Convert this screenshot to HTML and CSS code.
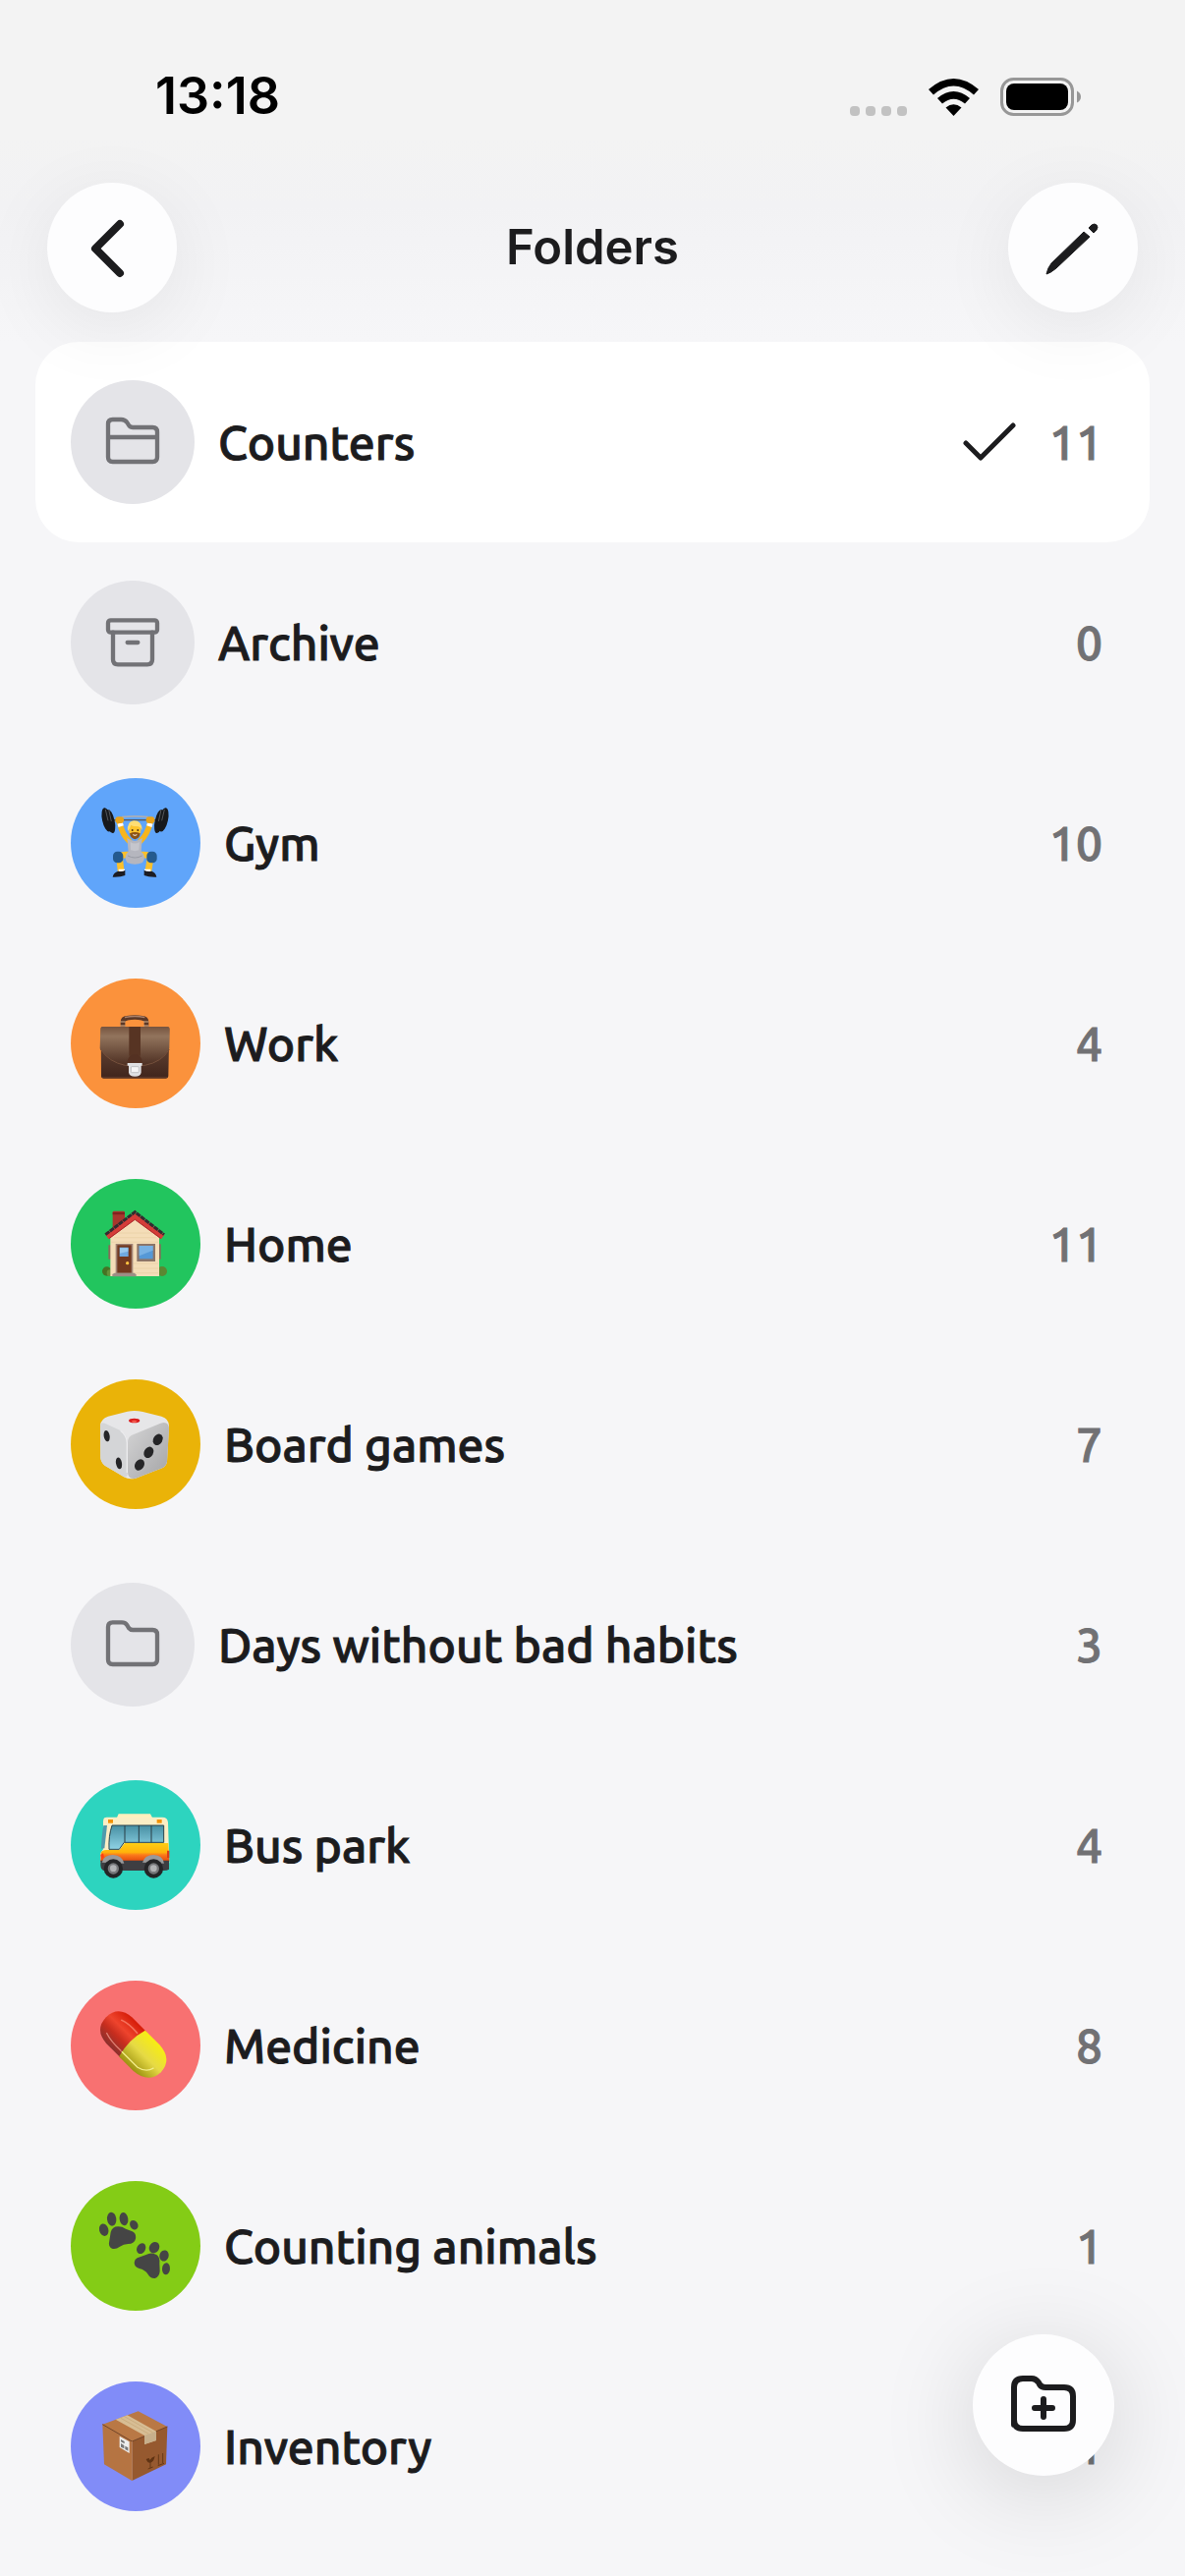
FILE: index.html
```
<!DOCTYPE html>
<html lang="en">
<head>
  <meta charset="UTF-8">
  <meta name="viewport" content="width=device-width, initial-scale=1.0">
  <title>Folders</title>
  <link rel="stylesheet" href="styles.css">
</head>
<body>

  <header class="top">
    <div class="status-bar">
      <span class="time">13:18</span>
      <div class="status-icons">
        <svg class="dots" viewBox="0 0 58 10" fill="#c2c2c2">
          <rect width="10" height="10" rx="4"/>
          <rect x="16" width="10" height="10" rx="4"/>
          <rect x="32" width="10" height="10" rx="4"/>
          <rect x="48" width="10" height="10" rx="4"/>
        </svg>
        <svg class="wifi" viewBox="0 0 51 38">
          <path d="M0 11Q25.500 -11 51 11L46 16.500Q25.500 -1.500 5 16.500Z"/>
          <path d="M9 20Q25.500 6 42 20L37 25.500Q25.500 16 14 25.500Z"/>
          <path d="M17.500 29.500Q25.500 23 33.500 29.500L25.500 38Z"/>
        </svg>
        <svg class="battery" viewBox="0 0 83 39">
          <rect x="1.500" y="1.500" width="72" height="36" rx="12" fill="none" stroke="#979797" stroke-width="3"/>
          <rect x="6" y="6" width="63" height="27" rx="8"/>
          <path d="M78 13.500Q82 15.500 82 19.500Q82 23.500 78 25.500Z" fill="#979797"/>
        </svg>
      </div>
    </div>
    <nav class="nav">
      <button class="round-btn" type="button" aria-label="Back">
        <svg viewBox="0 0 132 132"><path class="line chevron" d="M74 42L49 67L74 92"/></svg>
      </button>
      <h1>Folders</h1>
      <button class="round-btn" type="button" aria-label="Edit">
        <svg viewBox="0 0 132 132" fill="#1c1c1e" stroke="#1c1c1e" stroke-linejoin="round">
          <path d="M39 93Q40 87 44 82L77 50L83 55L49 87Q43 92 39 93Z"/>
          <path d="M82 46L85 43Q88 41 90 43Q92 45 90 48L87 51Z"/>
        </svg>
      </button>
    </nav>
  </header>

  <main>
    <ul class="folders">
      <li><a class="row selected" href="#">
        <svg class="icon plain" viewBox="96 141 378 378">
          <path d="M210 376V275Q210 261 224 261H250Q261 261 267 269L273 278Q278 285 286 285H346Q360 285 360 299V376Q360 390 346 390H224Q210 390 210 376ZM210 315H360"/>
        </svg>
        <span class="name">Counters</span>
        <svg class="check" viewBox="0 0 54 42"><path class="line" d="M3 22L18 37L51 4"/></svg>
        <span class="count">11</span>
      </a></li>
      <li><a class="row" href="#">
        <svg class="icon plain" viewBox="96 753 378 378">
          <rect x="210" y="874" width="150" height="37" rx="8"/>
          <path d="M225 911V994Q225 1009 240 1009H330Q345 1009 345 994V911M269 942H301"/>
        </svg>
        <span class="name">Archive</span>
        <span class="count">0</span>
      </a></li>
      <li><a class="row" href="#">
        <svg class="icon blue" viewBox="66 66 396 396">
          <path d="M195 194L325 194" stroke="#555" stroke-width="4"/>
          <path d="M222 185Q260 180 302 185" stroke="#a9aeb8" stroke-width="5" fill="none"/>
          <g fill="#17191c">
            <ellipse cx="176" cy="193" rx="14" ry="37" transform="rotate(-12 176 193)"/>
            <ellipse cx="187" cy="198" rx="13" ry="37" transform="rotate(-12 187 198)"/>
            <ellipse cx="349" cy="193" rx="14" ry="37" transform="rotate(12 349 193)"/>
            <ellipse cx="336" cy="198" rx="13" ry="37" transform="rotate(12 336 198)"/>
          </g>
          <path d="M172 162L180 196M182 162L190 198M352 162L344 196M342 162L334 198" stroke="#55575b" stroke-width="3"/>
          <path d="M216 205Q223 237 244 258M308 205Q300 237 279 258" stroke="#f6b51c" stroke-width="17" stroke-linecap="round" fill="none"/>
          <path d="M210 211L226 206M299 206L315 211" stroke="#fff" stroke-width="10"/>
          <rect x="202" y="184" width="26" height="20" rx="9" fill="#e9a31b"/>
          <rect x="296" y="184" width="26" height="20" rx="9" fill="#e9a31b"/>
          <path d="M240 300Q215 299 215 311L219 348M283 300Q309 299 309 311L303 348" stroke="#fbc02b" stroke-width="20" stroke-linecap="round" fill="none"/>
          <path d="M238 249Q262 267 284 249L281 290Q299 304 285 324Q262 334 238 324Q226 304 242 290Z" fill="#b5b6be"/>
          <path d="M248 261Q262 270 276 261L274 286Q262 291 249 286Z" fill="#c5c6cd"/>
          <path d="M240 303Q262 315 284 303" stroke="#999ba4" stroke-width="3" fill="none"/>
          <path d="M243 219Q244 246 262 249Q280 247 281 219Q271 205 252 208Z" fill="#ffc52e"/>
          <path d="M240 228Q237 199 258 196Q283 195 284 225Q279 213 266 213Q253 213 250 209Q247 220 240 228Z" fill="#ffdd73"/>
          <path d="M246 235Q262 227 278 235Q276 251 262 253Q248 250 246 235Z" fill="#8c5315"/>
          <path d="M256 239Q262 243 268 239" stroke="#fff" stroke-width="3" fill="none"/>
          <circle cx="254" cy="225" r="3" fill="#513414"/><circle cx="271" cy="225" r="3" fill="#513414"/>
          <rect x="195" y="290" width="31" height="35" rx="13" fill="#245a8e"/>
          <rect x="298" y="290" width="31" height="35" rx="13" fill="#245a8e"/>
          <path d="M212 344H231V354H212ZM291 344H310V354H291Z" fill="#fff"/>
          <path d="M194 368Q196 354 211 350Q224 353 232 347V363Q218 369 194 368ZM328 368Q326 354 313 350Q300 353 290 347V363Q304 369 328 368Z" fill="#1c1c22"/>
        </svg>
        <span class="name">Gym</span>
        <span class="count">10</span>
      </a></li>
      <li><a class="row" href="#">
        <svg class="icon orange" viewBox="66 78 396 396">
          <defs>
            <linearGradient id="flap" x1="0" y1="0" x2="0" y2="1"><stop offset="0" stop-color="#76543f"/><stop offset=".25" stop-color="#92745d"/><stop offset="1" stop-color="#4d2f22"/></linearGradient>
            <linearGradient id="bag" x1="0" y1="0" x2="0" y2="1"><stop offset="0" stop-color="#755441"/><stop offset="1" stop-color="#3f241b"/></linearGradient>
          </defs>
          <path d="M225 224V211Q225 200 238 199Q262 194 284 199Q297 200 297 211V224" stroke="#5b3827" stroke-width="14" fill="none"/>
          <path d="M231 197Q262 190 292 197" stroke="#aa806a" stroke-width="4" fill="none"/>
          <path d="M217 210H233M288 210H304M217 222H233M288 222H304" stroke="#d8b08d" stroke-width="3"/>
          <path d="M158 230Q158 225 164 225H360Q366 225 367 231L364 376Q364 383 357 383H167Q159 383 159 376Z" fill="url(#bag)"/>
          <path d="M157 231Q157 225 164 225H361Q368 225 368 231L367 292Q345 333 292 343H232Q180 333 155 292Z" fill="url(#flap)"/>
          <path d="M157 294Q182 333 232 343H292Q345 333 367 294" stroke="#75503c" stroke-width="3" fill="none"/>
          <path d="M244 225H279V314H244Z" fill="#573423"/>
          <path d="M238 337Q240 310 262 310Q283 310 285 337Z" fill="#543122"/>
          <path d="M161 379H362" stroke="#6b4635" stroke-width="2"/>
          <path d="M239 336H284V344H281V365Q279 377 262 377Q245 377 243 365V344H239Z" fill="#dfe0e2"/>
          <rect x="250" y="347" width="24" height="18" rx="3" fill="#f5f5f5" stroke="#a9abad" stroke-width="2"/>
        </svg>
        <span class="name">Work</span>
        <span class="count">4</span>
      </a></li>
      <li><a class="row" href="#">
        <svg class="icon green" viewBox="66 60 396 396">
          <rect x="194" y="158" width="37" height="62" rx="4" fill="#a8372d"/>
          <path d="M194 162H231V169H194Z" fill="#81241f"/>
          <circle cx="176" cy="342" r="14" fill="#467324"/><circle cx="186" cy="347" r="10" fill="#65913a"/>
          <circle cx="345" cy="342" r="15" fill="#5b8732"/>
          <path d="M181 262H190V305H181ZM333 259H341V305H333Z" fill="#8a6959"/>
          <path d="M187 232L262 174L336 232V357H187Z" fill="#f4ddb8"/>
          <path d="M208 225H314M198 239H326M190 253H333M257 318H333M257 333H333M257 347H333" stroke="#e8cfa4" stroke-width="2"/>
          <path d="M177 237L262 173L347 237" fill="none" stroke="#d43d39" stroke-width="17"/>
          <path d="M172 230L262 161L351 230" fill="none" stroke="#332b30" stroke-width="9" stroke-dasharray="15 2"/>
          <path d="M184 241L262 184L340 241" fill="none" stroke="#a92529" stroke-width="3"/>
          <rect x="203" y="258" width="53" height="90" fill="#a18475"/>
          <rect x="208" y="262" width="43" height="85" fill="#73391f"/>
          <rect x="215" y="269" width="27" height="28" fill="#70aae0"/>
          <path d="M216 271H241V281L216 287Z" fill="#9ac9ed"/>
          <circle cx="239" cy="317" r="5" fill="#ffc343"/>
          <path d="M193 358V351L200 347H260L266 352V358Z" fill="#9d8e85"/>
          <rect x="268" y="258" width="56" height="54" fill="#8c7568"/>
          <rect x="275" y="264" width="42" height="40" fill="#5598d6"/>
          <path d="M275 264H317V278L275 295Z" fill="#78b1e3"/>
        </svg>
        <span class="name">Home</span>
        <span class="count">11</span>
      </a></li>
      <li><a class="row" href="#">
        <svg class="icon yellow" viewBox="66 72 396 396">
          <defs>
            <linearGradient id="dieRight" x1="0" y1="0" x2="1" y2="1"><stop offset="0" stop-color="#d5d5d6"/><stop offset="1" stop-color="#a4a4a6"/></linearGradient>
          </defs>
          <path d="M156 212Q158 193 180 185L239 170Q262 165 286 171L343 185Q366 192 366 214L360 323Q358 336 345 343L264 374Q244 379 228 370L170 335Q158 325 157 312Z" fill="#e6e6e8"/>
          <path d="M239 266Q240 244 260 239L340 206Q366 198 366 224L360 323Q358 336 345 343L264 374Q241 380 240 355Z" fill="url(#dieRight)"/>
          <path d="M156 210Q159 202 172 207L219 229Q238 239 239 266L240 356Q238 378 224 367L170 335Q158 325 157 312Z" fill="#d4d5d7"/>
          <path d="M238 357V265Q236 242 218 229" fill="none" stroke="#ececee" stroke-width="4"/>
          <ellipse cx="260" cy="198" rx="17" ry="7" fill="#d91d1d"/><ellipse cx="260" cy="200" rx="8" ry="3" fill="#f55f52"/>
          <g fill="#252527">
            <ellipse cx="176" cy="245" rx="9" ry="17" transform="rotate(-10 176 245)"/>
            <ellipse cx="213" cy="328" rx="9" ry="18" transform="rotate(-10 213 328)"/>
            <ellipse cx="332" cy="256" rx="14" ry="18" transform="rotate(30 332 256)"/>
            <ellipse cx="304" cy="295" rx="14" ry="18" transform="rotate(30 304 295)"/>
            <ellipse cx="276" cy="333" rx="14" ry="18" transform="rotate(30 276 333)"/>
          </g>
        </svg>
        <span class="name">Board games</span>
        <span class="count">7</span>
      </a></li>
      <li><a class="row" href="#">
        <svg class="icon plain" viewBox="66 63 378 378">
          <path d="M180 298V198Q180 184 194 184H222Q232 184 237 191L243 201Q248 207 256 207H316Q330 207 330 221V298Q330 312 316 312H194Q180 312 180 298Z"/>
        </svg>
        <span class="name">Days without bad habits</span>
        <span class="count">3</span>
      </a></li>
      <li><a class="row" href="#">
        <svg class="icon teal" viewBox="66 666 396 396">
          <defs>
            <linearGradient id="glass" x1="0" y1="0" x2="0" y2="1"><stop offset="0" stop-color="#478fa3"/><stop offset="1" stop-color="#8fd3e5"/></linearGradient>
            <linearGradient id="busSide" x1="0" y1="0" x2="0" y2="1"><stop offset="0" stop-color="#ffce14"/><stop offset=".5" stop-color="#ffb30b"/><stop offset=".65" stop-color="#fb781b"/><stop offset="1" stop-color="#e4480c"/></linearGradient>
          </defs>
          <path d="M207 780L212 769H309L315 780Z" fill="#fff0bd"/>
          <path d="M166 786Q167 779 176 779H345Q362 779 363 795L367 919H157V889L165 877V801Q164 792 166 786Z" fill="#fbeec5"/>
          <path d="M166 804H177L169 874L159 875Q160 835 166 804Z" fill="#4f9aac"/>
          <path d="M158 888Q160 880 174 879H215L231 858H364L367 914H157Z" fill="url(#busSide)"/>
          <path d="M157 911H366V938Q360 942 350 942H166Q157 937 157 924Z" fill="#3e3e42"/>
          <path d="M192 804H350V856H229L214 877H183Q181 837 192 804Z" fill="url(#glass)" stroke="#27434c" stroke-width="3"/>
          <path d="M231 804V855M274 804V856M312 804V856" stroke="#283c44" stroke-width="3"/>
          <rect x="180" y="786" width="15" height="11" fill="#f39200"/><rect x="329" y="786" width="15" height="11" fill="#f39200"/>
          <path d="M161 917Q166 895 195 894Q224 896 229 920ZM285 917Q291 895 319 894Q347 895 351 920Z" fill="#99999a"/>
          <path d="M157 894L165 889L168 901L160 907Z" fill="#ff3e14"/><path d="M360 881H367V903H360Z" fill="#db3c17"/>
          <g>
            <circle cx="196" cy="936" r="29" fill="#252527"/><circle cx="196" cy="936" r="17" fill="#77787b"/><circle cx="196" cy="935" r="10" fill="#b2b3b5"/>
            <circle cx="319" cy="936" r="29" fill="#252527"/><circle cx="319" cy="936" r="17" fill="#77787b"/><circle cx="319" cy="935" r="10" fill="#b2b3b5"/>
          </g>
        </svg>
        <span class="name">Bus park</span>
        <span class="count">4</span>
      </a></li>
      <li><a class="row" href="#">
        <svg class="icon red" viewBox="66 48 396 396">
          <defs>
            <linearGradient id="pillRed" x1="0" y1="0" x2="0" y2="1"><stop offset="0" stop-color="#d61c08"/><stop offset=".4" stop-color="#ee442d"/><stop offset=".65" stop-color="#c82d1e"/><stop offset="1" stop-color="#8c302d"/></linearGradient>
            <linearGradient id="pillYellow" x1="0" y1="0" x2="0" y2="1"><stop offset="0" stop-color="#f7ed12"/><stop offset=".5" stop-color="#e6da45"/><stop offset="1" stop-color="#9c9210"/></linearGradient>
          </defs>
          <g transform="rotate(45 258 244)">
            <path d="M258 188H196Q140 192 139 244Q140 296 196 300H258Z" fill="url(#pillRed)"/>
            <path d="M252 188H314Q374 192 376 244Q374 296 314 301H252Q235 244 252 188Z" fill="url(#pillYellow)"/>
            <path d="M179 217Q200 208 240 211" stroke="#f5705b" stroke-width="5" stroke-linecap="round" fill="none"/>
            <path d="M175 277Q200 286 243 284" stroke="#de8175" stroke-width="4" stroke-linecap="round" fill="none"/>
            <path d="M248 284H315Q345 277 351 252" stroke="#f4ed8b" stroke-width="4" stroke-linecap="round" fill="none"/>
          </g>
        </svg>
        <span class="name">Medicine</span>
        <span class="count">8</span>
      </a></li>
      <li><a class="row" href="#">
        <svg class="icon lime" viewBox="66 60 396 396" fill="#454545">
          <ellipse cx="167" cy="209" rx="14" ry="19" transform="rotate(-15 167 209)"/>
          <ellipse cx="191" cy="176" rx="14" ry="21" transform="rotate(-7 191 176)"/>
          <ellipse cx="228" cy="176" rx="13" ry="20" transform="rotate(-9 228 176)"/>
          <ellipse cx="259" cy="194" rx="12" ry="15" transform="rotate(-30 259 194)"/>
          <path d="M188 216Q193 198 212 199Q223 199 234 206L254 214Q267 221 264 236Q261 251 241 252Q227 252 216 260Q204 269 192 266Q181 262 183 248Z"/>
          <ellipse cx="281" cy="266" rx="13" ry="17" transform="rotate(27 281 266)"/>
          <ellipse cx="321" cy="263" rx="15" ry="18" transform="rotate(30 321 263)"/>
          <ellipse cx="351" cy="288" rx="14" ry="17" transform="rotate(15 351 288)"/>
          <ellipse cx="357" cy="328" rx="12" ry="18" transform="rotate(5 357 328)"/>
          <path d="M269 295L296 285Q312 276 328 285Q339 292 337 312L338 335Q337 352 323 357Q309 358 302 345Q293 331 275 327Q260 322 260 309Q261 299 269 295Z"/>
        </svg>
        <span class="name">Counting animals</span>
        <span class="count">1</span>
      </a></li>
      <li><a class="row" href="#">
        <svg class="icon violet" viewBox="66 72 396 396">
          <path d="M163 203L272 163L361 210L253 255Z" fill="#b97845"/>
          <path d="M163 203L253 255V375L168 325Z" fill="#b57442"/>
          <path d="M253 255L361 210L357 325L253 375Z" fill="#96592f"/>
          <path d="M163 203L253 255L361 210" stroke="#754522" stroke-width="3" fill="none"/>
          <path d="M253 255V375" stroke="#c58b5b" stroke-width="2"/>
          <path d="M203 188L239 175L327 224V252L291 264V237Z" fill="#d7bd94"/>
          <path d="M217 183L304 232M230 179L317 228" stroke="#c4a676" stroke-width="2"/>
          <path d="M291 237L327 224V252L291 264Z" fill="#c7af8b"/>
          <path d="M215 239L245 256V291L215 273Z" fill="#eee"/>
          <path d="M219 249L230 255V262L219 256ZM219 261L229 267V277L219 272ZM232 269L241 274V284L232 279Z" fill="#777"/>
          <path d="M296 309Q302 323 309 320Q319 318 323 300L313 305L308 312L305 306Z" fill="#603313"/>
          <path d="M309 318V337M302 339L317 333M334 295V326M347 291V321M332 329L351 322" stroke="#653817" stroke-width="3"/>
        </svg>
        <span class="name">Inventory</span>
        <span class="count">1</span>
      </a></li>
    </ul>
  </main>

  <button class="add-btn" type="button" aria-label="New folder">
    <svg viewBox="0 0 144 144">
      <path class="line thick" d="M42 92V54Q42 45 51 45H60Q64 45 67 49L68 51Q70 54 74 54H93Q102 54 102 63V87Q102 96 93 96H51Q42 96 42 87ZM72 66V84M63 75H81"/>
    </svg>
  </button>

</body>
</html>
```
FILE: styles.css
```
* {
  box-sizing: border-box;
}

body {
  margin: 0;
  background-color: #f6f6f8;
  color: #1c1c1e;
  font-family: "Ubuntu", "Noto Sans", sans-serif;
}

svg {
  display: block;
}

.top {
  position: relative;
  z-index: 1;
  font-family: Inter, sans-serif;
}

.top::before {
  content: "";
  position: absolute;
  inset: 0;
  z-index: -1;
  background: linear-gradient(#f3f3f3 40%, #f2f2f4 60%, #f6f6f8);
}

.status-bar {
  display: flex;
  justify-content: space-between;
  align-items: center;
  padding: 66px 105px 56px 158px;
}

.time {
  font-size: 52px;
  line-height: 64px;
  font-weight: 600;
  color: #000;
}

.status-icons {
  display: flex;
  align-items: flex-end;
}

.dots {
  width: 58px;
  height: 10px;
  margin-right: 22px;
}

.wifi {
  width: 51px;
  height: 38px;
  margin-right: 22px;
}

.battery {
  width: 83px;
  height: 39px;
}

.nav {
  display: flex;
  justify-content: space-between;
  align-items: center;
  padding: 0 48px 30px;
}

h1 {
  margin: 0;
  font-size: 49px;
  line-height: 64px;
  font-weight: 600;
}

button {
  padding: 0;
  border: none;
  border-radius: 50%;
  background-color: #fdfdfe;
  cursor: pointer;
}

button svg {
  width: 100%;
  height: 100%;
}

.round-btn {
  width: 132px;
  height: 132px;
  box-shadow: 0 16px 80px rgba(0, 0, 0, 0.07);
}

.line {
  fill: none;
  stroke: #1c1c1e;
  stroke-width: 5;
  stroke-linecap: round;
  stroke-linejoin: round;
}

.thick {
  stroke-width: 6;
}

.chevron {
  stroke-width: 8;
}

.folders {
  list-style: none;
  margin: 0;
  padding: 0 36px 30px;
}

.row {
  display: flex;
  align-items: center;
  height: 204px;
  padding: 0 48px 0 36px;
  border-radius: 44px;
  color: inherit;
  font-size: 48px;
  font-weight: 500;
  text-decoration: none;
  -webkit-text-stroke: 1px;
}

.selected {
  background-color: #fff;
}

.icon {
  flex: none;
  width: 132px;
  height: 132px;
  margin-right: 24px;
  border-radius: 50%;
}

.plain {
  width: 126px;
  height: 126px;
  background-color: #e4e4e8;
  fill: none;
  stroke: #727276;
  stroke-width: 13;
  stroke-linecap: round;
  stroke-linejoin: round;
}

.blue { background-color: #60a5fa; }
.orange { background-color: #fb923c; }
.green { background-color: #22c55e; }
.yellow { background-color: #eab308; }
.teal { background-color: #2dd4bf; }
.red { background-color: #f87171; }
.lime { background-color: #84cc16; }
.violet { background-color: #818cf8; }

.name {
  flex: 1;
}

.check {
  width: 54px;
  height: 42px;
  margin-right: 34px;
}

.count {
  color: #717174;
}

.add-btn {
  position: fixed;
  right: 72px;
  bottom: 102px;
  z-index: 2;
  width: 144px;
  height: 144px;
  box-shadow: 0 16px 100px rgba(0, 0, 0, 0.15);
}
```
